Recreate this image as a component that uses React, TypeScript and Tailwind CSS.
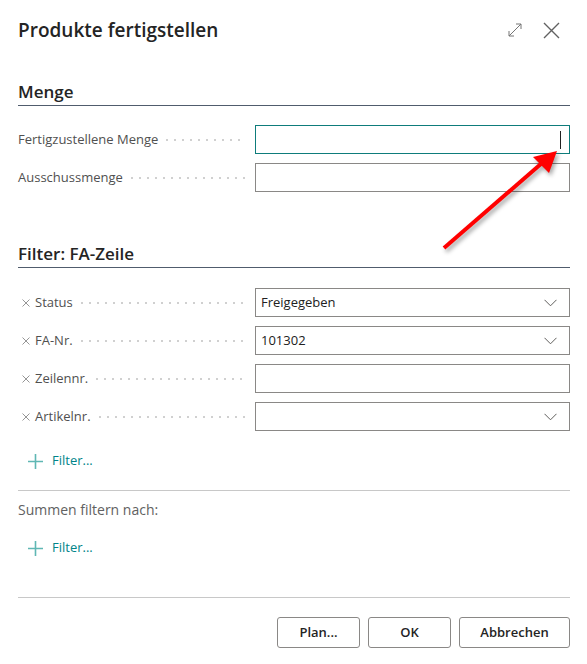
import React from "react";

const font = { fontFamily: '"Open Sans", "Noto Sans", sans-serif' };

const Leader = () => (
  <div className="flex-1 mx-[8px] h-[2px] self-center bg-[linear-gradient(to_right,#d0d0d0_2px,transparent_2px)] bg-[length:8px_2px] bg-repeat-x" />
);

const Chevron = () => (
  <svg width="13" height="8" viewBox="0 0 13 8" className="shrink-0">
    <path d="M0.5 0.8 L6.5 6.8 L12.5 0.8" fill="none" stroke="#605e5c" strokeWidth="1" />
  </svg>
);

const RemoveX = () => (
  <svg width="8" height="8" viewBox="0 0 8 8" className="ml-[4px] mr-[5px] shrink-0">
    <path d="M0.5 0.5 L7.5 7.5 M7.5 0.5 L0.5 7.5" fill="none" stroke="#8a8a8a" strokeWidth="0.9" />
  </svg>
);

const Field = ({
  label,
  value,
  select,
  focused,
  removable,
}: {
  label: string;
  value?: string;
  select?: boolean;
  focused?: boolean;
  removable?: boolean;
}) => (
  <div className="flex items-center h-[29px]">
    <div className="flex items-center w-[237px] pr-[2px] text-[13px] text-[#505050]">
      {removable && <RemoveX />}
      <span className="whitespace-nowrap">{label}</span>
      <Leader />
    </div>
    <div
      className={`flex-1 h-[29px] flex items-center justify-between px-[5px] text-[13px] text-[#212121] border ${
        focused ? "border-[#0e7c7b]" : "border-[#8a8886]"
      }`}
    >
      <span>{value}</span>
      {select && <span className="mr-[7px]"><Chevron /></span>}
      {focused && <span className="w-[1px] h-[18px] bg-[#212121] mr-[3px]" />}
    </div>
  </div>
);

const AddFilter = () => (
  <div className="flex items-center h-[24px] pl-[10px] text-[13px] text-[#008489]">
    <svg width="15" height="15" viewBox="0 0 15 15" className="mr-[9px]">
      <path d="M7.5 0 V15 M0 7.5 H15" stroke="#5fb7b4" strokeWidth="1.6" />
    </svg>
    <span>Filter...</span>
  </div>
);

export default function App() {
  return (
    <div className="relative w-[587px] h-[664px] bg-white pl-[18px] pr-[17px]" style={font}>
      <div className="flex items-center justify-between h-[60px]">
        <h1 className="text-[19px] font-semibold text-[#242424]">Produkte fertigstellen</h1>
        <div className="flex items-center gap-[20px] mr-[10px]">
          <svg width="16" height="16" viewBox="0 0 16 16">
            <path d="M2 14 L14 2 M9 2 H14 V7 M2 9 V14 H7" fill="none" stroke="#757575" strokeWidth="1" />
          </svg>
          <svg width="17" height="17" viewBox="0 0 17 17">
            <path d="M1 1 L16 16 M16 1 L1 16" fill="none" stroke="#616161" strokeWidth="1.4" />
          </svg>
        </div>
      </div>

      <div className="mt-[20px] text-[17px] leading-[24px] font-semibold text-[#242424] border-b border-[#505c6d] pb-[1px]">
        Menge
      </div>
      <div className="mt-[19px] flex flex-col gap-[9px]">
        <Field label="Fertigzustellene Menge" focused />
        <Field label="Ausschussmenge" />
      </div>

      <div className="mt-[50px] text-[17px] leading-[24px] font-semibold text-[#242424] border-b border-[#505c6d] pb-[1px]">
        Filter: FA-Zeile
      </div>
      <div className="mt-[20px] flex flex-col gap-[9px]">
        <Field label="Status" value="Freigegeben" select removable />
        <Field label="FA-Nr." value="101302" select removable />
        <Field label="Zeilennr." removable />
        <Field label="Artikelnr." select removable />
      </div>

      <div className="mt-[18px]">
        <AddFilter />
      </div>
      <div className="mt-[17px] border-t border-[#c8c8c8]" />
      <div className="mt-[9px] leading-[20px] text-[14px] text-[#616161]">Summen filtern nach:</div>
      <div className="mt-[16px]">
        <AddFilter />
      </div>
      <div className="mt-[37px] border-t border-[#c8c8c8]" />

      <div className="mt-[19px] flex justify-end gap-[8px]">
        {[
          ["Plan...", "w-[83px]"],
          ["OK", "w-[83px]"],
          ["Abbrechen", "w-[111px]"],
        ].map(([t, w]) => (
          <button
            key={t}
            className={`${w} h-[31px] border border-[#8a8886] rounded-[3px] bg-white text-[13px] font-semibold text-[#242424]`}
          >
            {t}
          </button>
        ))}
      </div>

      <svg
        className="absolute left-0 top-0 pointer-events-none drop-shadow-[2px_3px_2px_rgba(0,0,0,0.35)]"
        width="587"
        height="664"
      >
        <line x1="444" y1="248" x2="542" y2="163" stroke="#ff0000" strokeWidth="4" />
        <polygon points="557,151 549,173 533,157" fill="#ff0000" />
      </svg>
    </div>
  );
}
